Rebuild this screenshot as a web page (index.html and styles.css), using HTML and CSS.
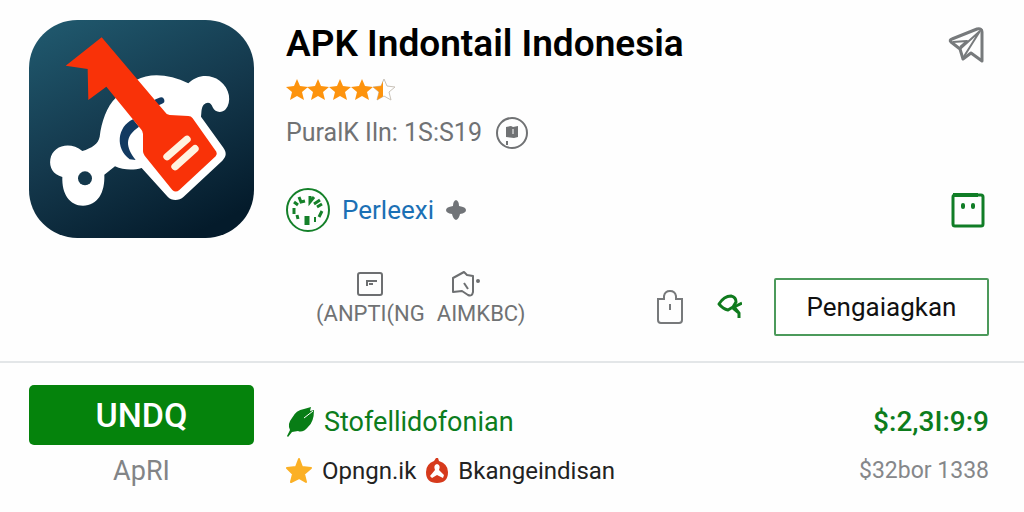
FILE: index.html
```html
<!DOCTYPE html>
<html lang="id">
<head>
    <meta charset="UTF-8">
    <meta name="viewport" content="width=device-width, initial-scale=1.0">
    <title>APK Indontail Indonesia</title>
    <link rel="stylesheet" href="styles.css">
</head>
<body>
    <header class="app">
        <svg class="app-icon" viewBox="28 30 675 654" aria-hidden="true">
            <defs>
                <linearGradient id="tile" x1="0.2" y1="0" x2="0.7" y2="1">
                    <stop offset="0" stop-color="#1f566b"/>
                    <stop offset="0.5" stop-color="#14384c"/>
                    <stop offset="1" stop-color="#041b2b"/>
                </linearGradient>
            </defs>
            <rect x="28" y="30" width="675" height="654" rx="145" fill="url(#tile)"/>
            <path fill="#fff" d="M350 210C390 188 450 192 506 220C530 195 570 190 600 212C632 236 636 276 618 298C606 310 586 308 579 292C575 276 562 274 552 284C544 294 546 308 544 320L610 412C622 428 620 440 608 452L492 560C478 573 456 573 444 560L366 474C340 482 310 480 286 469L254 494C256 548 234 586 190 587C150 587 126 552 128 501C100 494 88 472 92 448C98 408 150 392 188 423C216 414 236 402 240 380C246 336 260 290 290 262Z"/>
            <path fill="none" stroke="#123a61" stroke-width="20" stroke-linecap="round" d="M424 272Q400 280 384 300"/>
            <path fill="#123a61" d="M340 328C292 350 286 416 330 448L348 450C318 410 314 380 358 350Z"/>
            <circle cx="196" cy="505" r="21" fill="#14384c"/>
            <path fill="#f93208" d="M246 82L436 306Q440 314 450 315L506 318Q514 318 519 325L590 425Q594 433 588 439L479 540Q468 549 458 540L375 437Q370 431 370 424V372Q370 364 364 358L260 230L206 270L204 177L138 167Z"/>
            <path stroke="#fff3e0" stroke-width="22" stroke-linecap="round" d="M442 440L502 388M466 470L526 416"/>
        </svg>

        <div class="info">
            <div class="row title-row">
                <h1>APK Indontail Indonesia</h1>
                <button class="icon-btn" aria-label="Kirim">
                    <svg width="38" height="40" viewBox="0 0 38 40" fill="none" stroke="#777a7c" stroke-width="3" stroke-linejoin="round">
                        <path d="M3 18Q1 16 4 15L29 5Q34 4 34 8V37L23 29L15 35L12 25Z"/>
                        <path stroke-width="2" d="M12 25L32 7L15 34M5 18L19 17L12 23"/>
                    </svg>
                </button>
            </div>

            <svg class="stars" width="110" height="24" viewBox="0 0 110 24" role="img" aria-label="4,5">
                <defs>
                    <path id="star" d="M10 1L13 8L21 9L15 14L17 22L10 18L3 22L5 14L-1 9L7 8Z"/>
                    <clipPath id="half"><path d="M-1 0H9V24H-1Z"/></clipPath>
                </defs>
                <g fill="#fd930d">
                    <use href="#star" x="1"/>
                    <use href="#star" x="22"/>
                    <use href="#star" x="44"/>
                    <use href="#star" x="66"/>
                    <use href="#star" x="88" fill="#fff" stroke="#c9c2b8"/>
                    <g transform="translate(88 0)"><use href="#star" clip-path="url(#half)"/></g>
                </g>
            </svg>

            <div class="meta">
                <span>PuralK Iln: 1S:S19</span>
                <svg width="32" height="32" viewBox="0 0 32 32">
                    <circle cx="16" cy="16" r="15" fill="none" stroke="#707274" stroke-width="2"/>
                    <path fill="#707274" d="M10 10L15 9L17 10L22 9V20L18 21L10 20Z"/>
                    <path stroke="#fff" d="M17 12V17"/>
                    <path stroke="#707274" stroke-width="2" d="M11 24V28"/>
                </svg>
            </div>

            <div class="row publisher">
                <a href="#">
                    <svg width="44" height="44" viewBox="0 0 44 44" fill="none" stroke="#148029">
                        <circle cx="22" cy="22" r="21" stroke-width="2"/>
                        <g stroke-width="3">
                            <path d="M8 14L12 17M13 9L15 14L19 13M24 8V14L28 9M28 16L34 12M31 19L36 16M8 20V26M11 27L12 31M36 23L33 29"/>
                            <path stroke-width="5" d="M21 28V37"/>
                            <path stroke-width="2" d="M29 29V34"/>
                        </g>
                    </svg>
                    <span>Perleexi</span>
                    <svg width="20" height="20" viewBox="0 0 20 20">
                        <path fill="#717478" d="M10 0Q13 1 13 6Q20 7 20 10Q20 13 14 14Q13 19 10 20Q7 19 6 14Q0 13 0 10Q0 7 7 6Q7 1 10 0Z"/>
                    </svg>
                </a>
                <button class="icon-btn" aria-label="Simpan">
                    <svg width="36" height="38" viewBox="0 0 36 38" fill="none" stroke="#107d26">
                        <rect x="3" y="4" width="30" height="31" rx="2" stroke-width="3"/>
                        <path stroke-width="4" d="M3 4H28"/>
                        <path stroke-width="4" stroke-linecap="round" d="M13 14V16M23 14V16"/>
                    </svg>
                </button>
            </div>

            <div class="row actions">
                <div class="tabs">
                    <div class="tab">
                        <svg width="26" height="28" viewBox="0 0 26 28" fill="none" stroke="#6d6f71" stroke-width="2">
                            <rect x="1" y="3" width="24" height="22" rx="2"/>
                            <path d="M10 16V11H20M12 14H16"/>
                        </svg>
                        <span>(ANPTI(NG</span>
                    </div>
                    <div class="tab">
                        <svg width="60" height="28" viewBox="0 0 60 28" fill="none" stroke="#6d6f71" stroke-width="2" stroke-linejoin="round">
                            <path d="M2 8L13 2L16 5L22 6V22Q21 27 17 25L11 21L2 22Z"/>
                            <path d="M13 13L17 19"/>
                            <circle cx="27" cy="11" r="1"/>
                        </svg>
                        <span>AIMKBC)</span>
                    </div>
                </div>
                <div class="tools">
                    <button class="icon-btn" aria-label="Tas">
                        <svg width="28" height="36" viewBox="0 0 28 36" fill="none" stroke="#77797b" stroke-width="2">
                            <path d="M2 10H8V7Q9 2 14 2Q19 2 20 7V10H26V31Q26 34 23 34H5Q2 34 2 31Z"/>
                            <path d="M14 15V21"/>
                        </svg>
                    </button>
                    <button class="icon-btn" aria-label="Cari">
                        <svg width="26" height="26" viewBox="0 0 26 26" fill="none" stroke="#0f7a1d" stroke-width="3" stroke-linejoin="round">
                            <path d="M3 10Q8 2 15 2Q20 3 20 8L17 13L12 16Q7 15 3 10Z"/>
                            <path d="M26 9L18 13L23 19V24M17 14L23 19"/>
                        </svg>
                    </button>
                    <button class="outline-btn">Pengaiagkan</button>
                </div>
            </div>
        </div>
    </header>

    <main class="offer">
        <div class="install">
            <button class="install-btn">UNDQ</button>
            <span>ApRI</span>
        </div>
        <div class="details">
            <div class="row green">
                <div class="label">
                    <svg width="28" height="32" viewBox="0 0 28 32">
                        <path fill="#087d16" d="M1 30L4 24Q1 18 6 12Q10 4 18 3L25 1L24 5L28 4Q28 16 22 21Q17 27 12 25L6 26L2 31Z"/>
                        <path stroke="#fff" stroke-width="1" d="M18 12L27 5"/>
                    </svg>
                    <span>Stofellidofonian</span>
                </div>
                <span class="price">$:2,3I:9:9</span>
            </div>
            <div class="row">
                <div class="label small">
                    <svg width="26" height="28" viewBox="0 0 26 28">
                        <path fill="#fbb025" stroke="#fbb025" stroke-width="2" stroke-linejoin="round" d="M13 2L16 10L25 11L18 17L20 25L13 21L5 25L7 17L1 11L10 10Z"/>
                    </svg>
                    <span>Opngn.ik</span>
                    <svg width="22" height="28" viewBox="0 0 22 28">
                        <path fill="#d63a1c" d="M10 1H12L13 4Q22 7 22 15Q22 26 11 26Q0 26 0 15Q0 7 8 4Z"/>
                        <path fill="#fff" d="M11 7Q15 8 13 13L18 18L17 21L11 18L6 21L4 19L9 13Q7 8 11 7Z"/>
                    </svg>
                    <span>Bkangeindisan</span>
                </div>
                <span class="old">$32bor 1338</span>
            </div>
        </div>
    </main>
</body>
</html>
```

FILE: styles.css
```css
* {
    margin: 0;
    padding: 0;
    box-sizing: border-box;
}

body {
    background: #fefefe;
    font-family: Roboto, "Liberation Sans", sans-serif;
    color: #222;
}

button {
    font-family: inherit;
    cursor: pointer;
}

svg {
    display: block;
    flex-shrink: 0;
}

.app,
.offer {
    display: flex;
    gap: 32px;
    padding: 20px 35px 24px 29px;
}

.app {
    padding-bottom: 25px;
    border-bottom: 2px solid #e3e6e8;
}

.app-icon {
    width: 225px;
    height: 218px;
}

.info,
.details {
    flex: 1;
}

.row {
    display: flex;
    align-items: center;
    justify-content: space-between;
}

h1 {
    font-size: 37px;
    line-height: 48px;
    font-weight: 600;
    color: #000;
}

.icon-btn {
    border: none;
    background: none;
}

.title-row .icon-btn,
.publisher .icon-btn {
    margin-right: 3px;
}

.stars {
    margin-top: 10px;
}

.meta {
    display: flex;
    align-items: center;
    gap: 14px;
    margin-top: 15px;
    font-size: 25px;
    line-height: 32px;
    color: #707274;
}

.publisher {
    margin-top: 39px;
}

.publisher a {
    display: flex;
    align-items: center;
    gap: 12px;
    font-size: 26px;
    color: #1b70b5;
    text-decoration: none;
}

.actions {
    align-items: flex-end;
    margin-top: 38px;
}

.tabs {
    display: flex;
    gap: 12px;
    padding: 0 0 8px 30px;
}

.tab {
    display: flex;
    flex-direction: column;
    align-items: center;
    gap: 2px;
    font-size: 22px;
    line-height: 28px;
    color: #707274;
}

.tools {
    display: flex;
    align-items: center;
    gap: 32px;
}

.outline-btn {
    width: 215px;
    height: 58px;
    border: 2px solid #4c9a5b;
    border-radius: 2px;
    background: #fff;
    font-size: 26px;
    color: #111;
}

.install {
    width: 225px;
    text-align: center;
    font-size: 27px;
    line-height: 32px;
    color: #828486;
}

.install-btn {
    display: block;
    width: 100%;
    height: 60px;
    margin: 2px 0 10px;
    border: none;
    border-radius: 5px;
    background: #05830c;
    color: #fff;
    font-size: 34px;
    font-weight: 500;
}

.details .row {
    height: 49px;
}

.details {
    padding-top: 14px;
}

.label {
    display: flex;
    align-items: center;
    gap: 10px;
    font-size: 27px;
}

.small {
    font-size: 24px;
}

.green {
    color: #0c7c1c;
}

.price {
    font-size: 28px;
    font-weight: 500;
}

.old {
    font-size: 23px;
    color: #85878a;
}
```
